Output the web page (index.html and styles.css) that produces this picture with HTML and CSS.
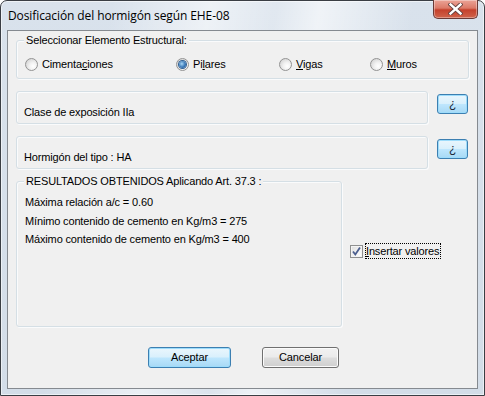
FILE: index.html
```html
<!DOCTYPE html>
<html lang="es">
<head>
<meta charset="utf-8">
<title>Dosificación del hormigón según EHE-08</title>
<link rel="stylesheet" href="styles.css">
</head>
<body>
<div class="window">
  <div class="titlebar">
    <span class="title">Dosificación del hormigón según EHE-08</span>
    <button class="close" aria-label="Cerrar">
      <svg width="15" height="12" viewBox="0 0 15 12">
        <path d="M2.5 1.5 L12.5 10.5 M12.5 1.5 L2.5 10.5" stroke="#5e3e3c" stroke-width="4.2" stroke-linecap="square" fill="none"/>
        <path d="M2.5 1.5 L12.5 10.5 M12.5 1.5 L2.5 10.5" stroke="#ffffff" stroke-width="2.4" stroke-linecap="square" fill="none"/>
      </svg>
    </button>
  </div>
  <div class="client">
    <div class="group g1">
      <span class="legend">Seleccionar Elemento Estructural:</span>
      <div class="radios">
        <label class="opt"><span class="radio"></span><span>Cimenta<u>c</u>iones</span></label>
        <label class="opt"><span class="radio on"></span><span>Pi<u>l</u>ares</span></label>
        <label class="opt"><span class="radio"></span><span><u>V</u>igas</span></label>
        <label class="opt"><span class="radio"></span><span><u>M</u>uros</span></label>
      </div>
    </div>

    <div class="row">
      <div class="group gsmall"><span class="value">Clase de exposición IIa</span></div>
      <button class="btn blue q">¿</button>
    </div>

    <div class="row">
      <div class="group gsmall g3"><span class="value">Hormigón del tipo : HA</span></div>
      <button class="btn blue q">¿</button>
    </div>

    <div class="row">
      <div class="group g4">
        <span class="legend">RESULTADOS OBTENIDOS Aplicando Art. 37.3 :</span>
        <div class="lines">
          <div>Máxima relación a/c = 0.60</div>
          <div>Mínimo contenido de cemento en Kg/m3 = 275</div>
          <div>Máximo contenido de cemento en Kg/m3 = 400</div>
        </div>
      </div>
      <label class="check">
        <span class="box">
          <svg width="11" height="11" viewBox="0 0 11 11">
            <path d="M2 5.5 L4.3 8.5 L9 1.5" stroke="#4c5f8f" stroke-width="1.8" fill="none"/>
          </svg>
        </span>
        <span class="focus"><u>I</u>nsertar valores</span>
      </label>
    </div>

    <div class="actions">
      <button class="btn blue ok">Aceptar</button>
      <button class="btn gray cancel">Cancelar</button>
    </div>
  </div>
</div>
</body>
</html>
```

FILE: styles.css
```css
* { box-sizing: border-box; }

html, body {
  margin: 0;
  padding: 0;
  width: 485px;
  height: 396px;
  overflow: hidden;
  background: #ffffff;
  font-family: "Liberation Sans", Arial, sans-serif;
  font-size: 11px;
  letter-spacing: -0.15px;
  color: #000;
}

.window {
  width: 485px;
  height: 396px;
  border: 1px solid #3a3e44;
  border-radius: 7px 7px 0 0;
  background:
    linear-gradient(100deg, rgba(255,255,255,0) 20%, rgba(255,255,255,0.55) 38%, rgba(255,255,255,0.2) 50%, rgba(255,255,255,0.6) 58%, rgba(255,255,255,0) 75%),
    linear-gradient(180deg, #d9e2ec 0%, #d3dde8 100%);
  box-shadow: inset 0 0 0 1px rgba(255,255,255,0.55);
  padding: 0 6px 6px 6px;
  display: flex;
  flex-direction: column;
}

.titlebar {
  height: 29px;
  display: flex;
  justify-content: space-between;
  align-items: flex-start;
}

.title {
  font-family: "Open Sans", "Liberation Sans", sans-serif;
  font-size: 12px;
  line-height: 16px;
  padding-top: 7px;
  margin-left: 1px;
  color: #000;
  letter-spacing: -0.1px;
}

.close {
  width: 45px;
  height: 19px;
  margin-top: -1px;
  padding: 0;
  border: 1px solid #6a3a36;
  border-top: none;
  border-radius: 0 0 5px 5px;
  background: linear-gradient(180deg, #eba497 0%, #dc7a68 45%, #c5412c 55%, #d0644b 100%);
  box-shadow: inset 0 0 0 1px rgba(255,255,255,0.35);
  display: flex;
  align-items: center;
  justify-content: center;
}

.client {
  height: 359px;
  border: 1px solid #858a90;
  background: #f0f0f0;
  padding: 9px 8px 0 8px;
  display: flex;
  flex-direction: column;
}

.group {
  border: 1px solid #d5dfe5;
  border-radius: 3px;
  box-shadow: inset 1px 1px 0 #fafbfc, 1px 1px 0 #fafbfc;
}

.legend {
  display: block;
  width: fit-content;
  margin: -7px 0 0 7px;
  padding: 0 2px;
  line-height: 13px;
  background: #f0f0f0;
}

.g1 { height: 39px; }

.radios {
  display: grid;
  grid-template-columns: 151px 103px 91px auto;
  margin-top: 10px;
  padding-left: 8px;
  height: 14px;
}

.opt {
  display: flex;
  align-items: center;
  gap: 4px;
  line-height: 13px;
}

.radio {
  width: 13px;
  height: 13px;
  border-radius: 50%;
  border: 1px solid #939393;
  background: radial-gradient(circle at 65% 65%, #ffffff 0%, #f2f2f2 35%, #c9c9c9 100%);
  display: flex;
  align-items: center;
  justify-content: center;
  flex: none;
}

.radio.on::after {
  content: "";
  width: 7px;
  height: 7px;
  border-radius: 50%;
  background: radial-gradient(circle at 40% 40%, #a8d6f5 0%, #3b79b8 55%, #1b4f8c 100%);
  box-shadow: 0 0 0 1px #2f5f93;
}

.row {
  display: flex;
  align-items: flex-start;
  margin-top: 12px;
}

.gsmall {
  width: 412px;
  height: 33px;
  padding: 14px 0 0 7px;
}

.value { line-height: 13px; display: block; }

.btn {
  font-family: "Liberation Sans", Arial, sans-serif;
  font-size: 11px;
  letter-spacing: -0.15px;
  color: #000;
  padding: 0;
  border-radius: 3px;
  line-height: 13px;
}

.btn.blue {
  border: 1px solid #3c7fb1;
  background: linear-gradient(180deg, #eaf6fd 0%, #d9f0fc 48%, #bee6fd 52%, #a7d9f5 100%);
  box-shadow: inset 0 0 0 1px #9ddcfb;
}

.btn.gray {
  border: 1px solid #707070;
  background: linear-gradient(180deg, #f2f2f2 0%, #ebebeb 48%, #dddddd 52%, #cfcfcf 100%);
  box-shadow: inset 0 0 0 1px #fbfbfb;
}

.q {
  width: 31px;
  height: 20px;
  margin: 3px 0 0 9px;
  font-size: 12px;
  color: #1b2a3a;
}

.g4 {
  width: 326px;
  height: 146px;
}

.lines {
  margin-top: 5px;
  padding-left: 8px;
  line-height: 18.5px;
}

.check {
  display: flex;
  align-items: center;
  gap: 2px;
  margin: 62px 0 0 8px;
}

.box {
  width: 13px;
  height: 13px;
  border: 1px solid #8e8f8f;
  background: linear-gradient(135deg, #dcdcdc 0%, #f4f4f4 60%, #ffffff 100%);
  box-shadow: inset 0 0 0 1px #f4f4f4;
  display: flex;
  align-items: center;
  justify-content: center;
  flex: none;
}

.focus {
  border: 1px dotted #000;
  padding: 0 1px 0 0;
  line-height: 14px;
}

.actions {
  display: flex;
  justify-content: center;
  gap: 31px;
  margin-top: 20px;
  padding-left: 2px;
}

.ok { width: 83px; height: 21px; }
.cancel { width: 77px; height: 21px; }
```
